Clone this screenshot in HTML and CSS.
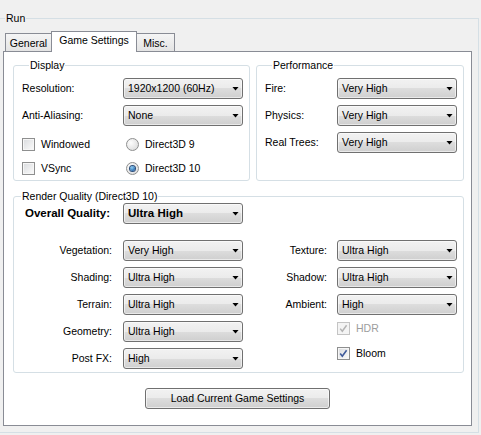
FILE: index.html
```html
<!DOCTYPE html>
<html>
<head>
<meta charset="utf-8">
<title>Run - Game Settings</title>
<link rel="stylesheet" href="styles.css">
</head>
<body>
<fieldset class="run">
  <legend>Run</legend>
  <div class="tabs">
    <div class="tab tab-general">General</div>
    <div class="tab tab-active">Game Settings</div>
    <div class="tab tab-misc">Misc.</div>
  </div>
  <div class="panel">
    <div class="top-row">
      <fieldset class="box display">
        <legend>Display</legend>
        <div class="form-grid display-grid">
          <span class="lbl">Resolution:</span>
          <div class="combo"><span>1920x1200 (60Hz)</span></div>
          <span class="lbl">Anti-Aliasing:</span>
          <div class="combo"><span>None</span></div>
        </div>
        <div class="opt-grid">
          <div class="check"><span class="cb"></span><span>Windowed</span></div>
          <div class="check radio-item"><span class="rb"></span><span>Direct3D 9</span></div>
          <div class="check"><span class="cb"></span><span>VSync</span></div>
          <div class="check radio-item"><span class="rb on"></span><span>Direct3D 10</span></div>
        </div>
      </fieldset>
      <fieldset class="box perf">
        <legend>Performance</legend>
        <div class="form-grid perf-grid">
          <span class="lbl">Fire:</span>
          <div class="combo"><span>Very High</span></div>
          <span class="lbl">Physics:</span>
          <div class="combo"><span>Very High</span></div>
          <span class="lbl">Real Trees:</span>
          <div class="combo"><span>Very High</span></div>
        </div>
      </fieldset>
    </div>
    <fieldset class="box quality">
      <legend>Render Quality (Direct3D 10)</legend>
      <div class="rq-grid">
        <span class="lbl-r lbl-bold">Overall Quality:</span>
        <div class="combo combo-bold"><span>Ultra High</span></div>
      </div>
      <div class="rq-grid rq-main">
        <span class="lbl-r">Vegetation:</span>
        <div class="combo"><span>Very High</span></div>
        <span class="lbl-r lbl-r2">Texture:</span>
        <div class="combo"><span>Ultra High</span></div>

        <span class="lbl-r">Shading:</span>
        <div class="combo"><span>Ultra High</span></div>
        <span class="lbl-r lbl-r2">Shadow:</span>
        <div class="combo"><span>Ultra High</span></div>

        <span class="lbl-r">Terrain:</span>
        <div class="combo"><span>Ultra High</span></div>
        <span class="lbl-r lbl-r2">Ambient:</span>
        <div class="combo"><span>High</span></div>

        <span class="lbl-r row4 col1">Geometry:</span>
        <div class="combo row4 col2"><span>Ultra High</span></div>
        <div class="checks">
          <div class="check disabled"><span class="cb"><svg width="11" height="11" viewBox="0 0 11 11"><path d="M2.2 5.6 L4.3 8.2 L8.6 2.3" fill="none" stroke="#b4b4b4" stroke-width="1.5"/></svg></span><span>HDR</span></div>
          <div class="check"><span class="cb"><svg width="11" height="11" viewBox="0 0 11 11"><path d="M2.2 5.6 L4.3 8.2 L8.6 2.3" fill="none" stroke="#3f5a9a" stroke-width="1.6"/></svg></span><span>Bloom</span></div>
        </div>

        <span class="lbl-r row5 col1">Post FX:</span>
        <div class="combo row5 col2"><span>High</span></div>
      </div>
    </fieldset>
    <div class="btn">Load Current Game Settings</div>
  </div>
</fieldset>
</body>
</html>
```

FILE: styles.css
```css
* { box-sizing: border-box; }
html { overflow: hidden; }
html, body { margin: 0; }
body {
  width: 481px;
  height: 435px;
  padding-top: 12px;
  background: #f0f0f0;
  font-family: "Liberation Sans", Arial, sans-serif;
  font-size: 10.5px;
  line-height: 13px;
  color: #000;
  overflow: hidden;
}
fieldset { margin: 0; padding: 0; min-width: 0; }
legend { padding: 0 1px; line-height: 13px; height: 13px; }

/* outer group */
.run {
  margin-left: -1px;
  width: 480px;
  height: 421px;
  border: 1px solid #d5dfe5;
  padding: 0 0 0 3px;
}
.run > legend { margin-left: 2px; }

/* tabs */
.tabs {
  display: flex;
  align-items: flex-end;
  height: 20px;
  margin-top: 6px;
  padding-left: 2px;
}
.tab {
  height: 18px;
  border: 1px solid #898c95;
  border-bottom: 0;
  background: linear-gradient(#f5f5f5, #e4e4e4);
  padding-top: 3px;
  text-align: center;
  white-space: nowrap;
}
.tab-general { width: 47px; }
.tab-active {
  width: 86px;
  height: 21px;
  margin: 0 0 -1px -1px;
  padding-top: 2px;
  background: #fff;
  position: relative;
  z-index: 1;
}
.tab-misc { width: 39px; margin-left: -1px; }

/* tab page */
.panel {
  width: 469px;
  height: 375px;
  border: 1px solid #898c95;
  background: #fff;
  padding: 7px 7px 0 9px;
}
.top-row { display: flex; gap: 6px; }
.box {
  border: 1px solid #d5dfe5;
  border-radius: 3px;
}
.box > legend { margin-left: 7px; }
.display { width: 237px; padding: 6px 0 5px 8px; }
.perf { width: 208px; padding: 6px 0 0 8px; }

.form-grid {
  display: grid;
  grid-auto-rows: 21px;
  row-gap: 6px;
  align-items: center;
}
.display-grid { grid-template-columns: 101px 120px; }
.perf-grid { grid-template-columns: 72px 120px; }
.lbl { white-space: nowrap; }

.opt-grid {
  display: grid;
  grid-template-columns: 104px auto;
  grid-auto-rows: 13px;
  row-gap: 11px;
  margin-top: 12px;
}

/* checkboxes & radios */
.check {
  display: flex;
  align-items: center;
  gap: 6px;
  height: 13px;
  white-space: nowrap;
}
.cb {
  width: 13px;
  height: 13px;
  flex: none;
  border: 1px solid #8e8f8f;
  background: linear-gradient(135deg, #d9dbde, #fbfbfb);
  box-shadow: inset 0 0 0 1px #f6f6f6;
  display: flex;
  align-items: center;
  justify-content: center;
}
.cb svg { display: block; }
.rb {
  width: 13px;
  height: 13px;
  flex: none;
  border: 1px solid #8e8f8f;
  border-radius: 50%;
  background: radial-gradient(circle at 35% 35%, #fdfdfd, #d6d6d6);
  display: flex;
  align-items: center;
  justify-content: center;
}
.rb.on::after {
  content: "";
  width: 5px;
  height: 5px;
  border-radius: 50%;
  background: radial-gradient(circle at 40% 35%, #8fd0f4, #1c5ea6 80%);
  box-shadow: 0 0 0 1px #2b4c78;
}
.disabled { color: #9d9d9d; }
.disabled .cb {
  border-color: #c4c4c4;
  background: #f4f4f4;
  box-shadow: none;
}

/* combo boxes */
.combo {
  display: flex;
  align-items: center;
  justify-content: space-between;
  height: 21px;
  width: 120px;
  border: 1px solid #707070;
  border-radius: 3px;
  padding: 0 3px 0 4px;
  background: linear-gradient(#f2f2f2 0%, #ebebeb 50%, #dddddd 50%, #cfcfcf 100%);
  box-shadow: inset 0 0 0 1px rgba(255, 255, 255, 0.55);
  white-space: nowrap;
}
.combo::after {
  content: "";
  width: 7px;
  height: 4px;
  flex: none;
  background: #000;
  clip-path: polygon(0 0, 100% 0, 50% 100%);
}
.combo-bold { font-weight: bold; font-size: 11.5px; }

/* render quality */
.quality { margin-top: 9px; padding: 0 0 3px 0; }
.rq-grid {
  display: grid;
  grid-template-columns: 109px 120px 94px 120px;
  grid-auto-rows: 21px;
  row-gap: 6px;
  align-items: center;
}
.rq-main { margin-top: 16px; }
.row4 { grid-row: 4; }
.row5 { grid-row: 5; }
.col1 { grid-column: 1; }
.col2 { grid-column: 2; }
.lbl-r { text-align: right; padding-right: 11px; white-space: nowrap; }
.lbl-r2 { padding-right: 10px; }
.lbl-bold { font-weight: bold; font-size: 11.5px; padding-right: 13px; }
.checks {
  grid-column: 4;
  grid-row: 4 / span 2;
  align-self: start;
  display: flex;
  flex-direction: column;
  gap: 12px;
  padding-top: 1px;
}

/* button */
.btn {
  width: 185px;
  height: 21px;
  margin: 15px 0 0 132px;
  border: 1px solid #707070;
  border-radius: 3px;
  background: linear-gradient(#f2f2f2 0%, #ebebeb 50%, #dddddd 50%, #cfcfcf 100%);
  box-shadow: inset 0 0 0 1px rgba(255, 255, 255, 0.6);
  text-align: center;
  line-height: 19px;
  white-space: nowrap;
}
```
